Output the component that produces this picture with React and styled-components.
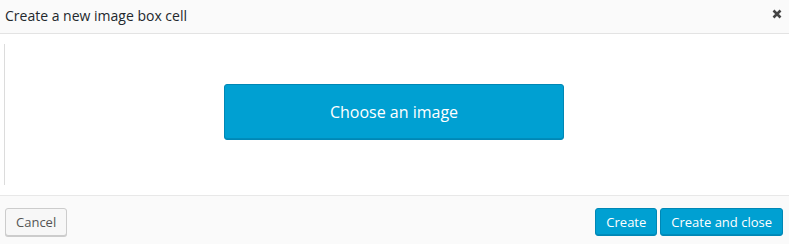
import React from "react";
import styled, { createGlobalStyle } from "styled-components";

const Global = createGlobalStyle`
  html, body { margin: 0; padding: 0; background: #fff; }
  body { font-family: "Open Sans", "Noto Sans", sans-serif; }
  #root { height: 244px; }
`;

const Dialog = styled.div`
  display: flex;
  flex-direction: column;
  width: 789px;
  height: 244px;
  background: #fff;
`;

const Header = styled.div`
  display: flex;
  align-items: center;
  justify-content: space-between;
  height: 34px;
  padding: 0 6px 6px 5px;
  box-sizing: border-box;
  background: #fafafa;
  border-bottom: 1px solid #e3e3e3;
`;

const Title = styled.h1`
  margin: 0;
  font-size: 14px;
  font-weight: 400;
  color: #23282d;
  line-height: 20px;
  padding-top: 4px;
`;

const Close = styled.button`
  border: 0;
  background: none;
  padding: 0;
  width: 12px;
  height: 12px;
  display: flex;
  align-items: center;
  justify-content: center;
  cursor: pointer;
`;

const Body = styled.div`
  flex: 1;
  padding: 10px 0 10px 4px;
  display: flex;
`;

const Panel = styled.div`
  flex: 1;
  border-left: 1px solid #dcdcdc;
  display: flex;
  align-items: center;
  justify-content: center;
  padding-bottom: 5px;
  padding-right: 6px;
`;

const BigButton = styled.button`
  width: 340px;
  height: 56px;
  background: #00a0d2;
  border: 1px solid #0087b5;
  border-radius: 3px;
  color: #fff;
  font-family: "Open Sans", sans-serif;
  font-size: 16px;
  font-weight: 400;
  box-shadow: inset 0 -1px 0 rgba(0, 80, 120, 0.25);
  cursor: pointer;
`;

const Footer = styled.div`
  height: 49px;
  box-sizing: border-box;
  border-top: 1px solid #e8e8e8;
  background: #fafafa;
  display: flex;
  align-items: flex-start;
  justify-content: space-between;
  padding: 12px 6px 0 5px;
`;

const Group = styled.div`
  display: flex;
  gap: 3px;
`;

const Button = styled.button`
  height: 28px;
  min-width: ${(p) => p.$minWidth || 0}px;
  padding: 0 10px;
  border-radius: 3px;
  font-family: "Open Sans", sans-serif;
  font-size: 13px;
  font-weight: 400;
  cursor: pointer;
  background: ${(p) => (p.$primary ? "#00a0d2" : "#f7f7f7")};
  color: ${(p) => (p.$primary ? "#fff" : "#555")};
  border: 1px solid ${(p) => (p.$primary ? "#0087b5" : "#cccccc")};
  box-shadow: ${(p) =>
    p.$primary ? "inset 0 -1px 0 rgba(0,80,120,0.25)" : "0 1px 0 #ccc"};
`;

export default function App() {
  return (
    <>
      <Global />
      <Dialog>
        <Header>
          <Title>Create a new image box cell</Title>
          <Close aria-label="Close">
            <svg width="10" height="10" viewBox="0 0 10 10">
              <path
                d="M1.5 1.5 L8.5 8.5 M8.5 1.5 L1.5 8.5"
                stroke="#444"
                strokeWidth="2.6"
                strokeLinecap="butt"
              />
            </svg>
          </Close>
        </Header>
        <Body>
          <Panel>
            <BigButton>Choose an image</BigButton>
          </Panel>
        </Body>
        <Footer>
          <Button>Cancel</Button>
          <Group>
            <Button $primary $minWidth={62}>Create</Button>
            <Button $primary>Create and close</Button>
          </Group>
        </Footer>
      </Dialog>
    </>
  );
}
